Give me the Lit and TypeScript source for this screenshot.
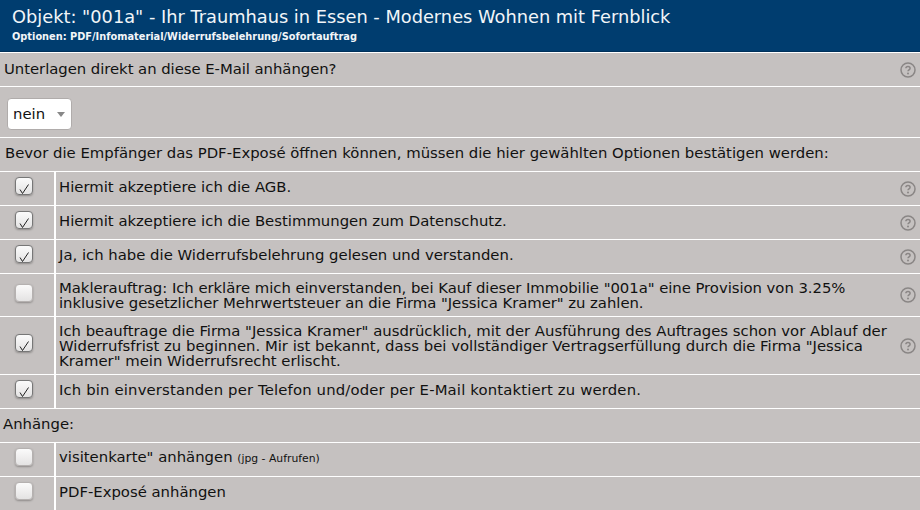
import { LitElement, html, css, nothing } from "lit";
import { customElement } from "lit/decorators.js";

const help = html`<svg class="help" viewBox="0 0 16 16" aria-hidden="true"><circle cx="8" cy="8" r="7" fill="none" stroke="#8a8685" stroke-width="1.5"/><path d="M5.9 6.3c0-1.2 1-1.9 2.1-1.9s2.1.7 2.1 1.8c0 1.6-2.1 1.6-2.1 3.1" fill="none" stroke="#8a8685" stroke-width="1.5"/><circle cx="8" cy="11.5" r="1" fill="#8a8685"/></svg>`;

interface Row { text: unknown; checked: boolean; help: boolean; h: string; cls?: string; }

const rows: Row[] = [
  { text: "Hiermit akzeptiere ich die AGB.", checked: true, help: true, h: "h33" },
  { text: "Hiermit akzeptiere ich die Bestimmungen zum Datenschutz.", checked: true, help: true, h: "h33" },
  { text: "Ja, ich habe die Widerrufsbelehrung gelesen und verstanden.", checked: true, help: true, h: "h33" },
  { text: html`Maklerauftrag: Ich erkläre mich einverstanden, bei Kauf dieser Immobilie "001a" eine Provision von 3.25%<br />inklusive gesetzlicher Mehrwertsteuer an die Firma "Jessica Kramer" zu zahlen.`, checked: false, help: true, h: "h42", cls: "tight" },
  { text: html`Ich beauftrage die Firma "Jessica Kramer" ausdrücklich, mit der Ausführung des Auftrages schon vor Ablauf der<br />Widerrufsfrist zu beginnen. Mir ist bekannt, dass bei vollständiger Vertragserfüllung durch die Firma "Jessica<br />Kramer" mein Widerrufsrecht erlischt.`, checked: true, help: true, h: "h57" },
  { text: "Ich bin einverstanden per Telefon und/oder per E-Mail kontaktiert zu werden.", checked: true, help: false, h: "h33", cls: "loose" },
];

const attach: Row[] = [
  { text: html`visitenkarte" anhängen <small>(jpg - Aufrufen)</small>`, checked: false, help: false, h: "h33" },
  { text: "PDF-Exposé anhängen", checked: false, help: false, h: "h33" },
];

@customElement("app-root")
export class AppRoot extends LitElement {
  static styles = css`
    :host { display: block; width: 920px; height: 510px; overflow: hidden; background: #fff;
      font-family: "DejaVu Sans", Verdana, sans-serif; font-size: 14.85px; color: #111; }
    * { box-sizing: border-box; }
    .head { height: 52px; background: #003d6f; color: #f2f5f8; padding: 7px 0 0 12px; border-bottom: 1px solid #00315a; }
    .title { font-size: 17.8px; line-height: 20px; }
    .sub { line-height: 14px; font-weight: bold; margin-top: 3px; font-size: 9.8px; }
    .band { background: #c5c1c0; margin-bottom: 1px; display: flex; align-items: center; }
    .q { height: 33px; margin-top: 1px; padding: 0 4px; justify-content: space-between; }
    .q span { padding-bottom: 1px; letter-spacing: -0.04px; }
    .sel { height: 50px; padding: 4px 0 0 7px; }
    .box { width: 65px; height: 32px; background: #fff; border: 1px solid #b0acab; border-radius: 4px; display: flex; align-items: center; padding-left: 5px; gap: 12px; }
    .arrow { width: 0; height: 0; border: 4px solid transparent; border-top: 5px solid #888; border-bottom: 0; }
    .lead { height: 33px; padding: 0 0 3px 5px; }
    .anh { height: 33px; padding: 0 0 3px 3px; }
    .row { display: flex; margin-bottom: 1px; background: #fff; gap: 2px; }
    .cell { background: #c5c1c0; display: flex; align-items: center; }
    .c1 { width: 54px; justify-content: center; padding: 0 6px 5px 0; }
    .c2 { flex: 1; padding: 0 4px 0 3px; justify-content: space-between; line-height: 15px; }
    .c2 .txt { padding-bottom: 3px; }
    .h42 .txt, .h57 .txt { padding: 2px 0 0; }
    .h33 { height: 33px; } .h42 { height: 42px; } .h57 { height: 57px; }
    .loose { letter-spacing: 0.15px; }
    .tight { letter-spacing: -0.04px; }
    .cb { width: 18px; height: 18px; border-radius: 4px; background: linear-gradient(#fbfbfb, #e4e3e3);
      border: 1px solid #b5b1b0; box-shadow: 0 1px 2px #8f8b8a; display: block; }
    .cb.on { border-color: #777; }
    .cb svg { display: block; width: 16px; height: 16px; overflow: visible; }
    .help { width: 16px; height: 16px; flex: none; }
    small { font-size: 10.8px; }
  `;

  private renderRow(r: Row) {
    return html`<div class="row">
      <div class="cell c1 ${r.h}"><span class="cb ${r.checked ? "on" : ""}">${r.checked
        ? html`<svg viewBox="0 0 16 16"><path d="M4 11.5L6.5 15.5L12.5 6.5" fill="none" stroke="#222" stroke-width="1"/></svg>`
        : nothing}</span></div>
      <div class="cell c2 ${r.h}"><span class="txt ${r.cls ?? ""}">${r.text}</span>${r.help ? help : nothing}</div>
    </div>`;
  }

  render() {
    return html`
      <div class="head">
        <div class="title">Objekt: "001a" - Ihr Traumhaus in Essen - Modernes Wohnen mit Fernblick</div>
        <div class="sub">Optionen: PDF/Infomaterial/Widerrufsbelehrung/Sofortauftrag</div>
      </div>
      <div class="band q"><span>Unterlagen direkt an diese E-Mail anhängen?</span>${help}</div>
      <div class="band sel"><div class="box"><span>nein</span><span class="arrow"></span></div></div>
      <div class="band lead">Bevor die Empfänger das PDF-Exposé öffnen können, müssen die hier gewählten Optionen bestätigen werden:</div>
      ${rows.map((r) => this.renderRow(r))}
      <div class="band anh">Anhänge:</div>
      ${attach.map((r) => this.renderRow(r))}
    `;
  }
}
